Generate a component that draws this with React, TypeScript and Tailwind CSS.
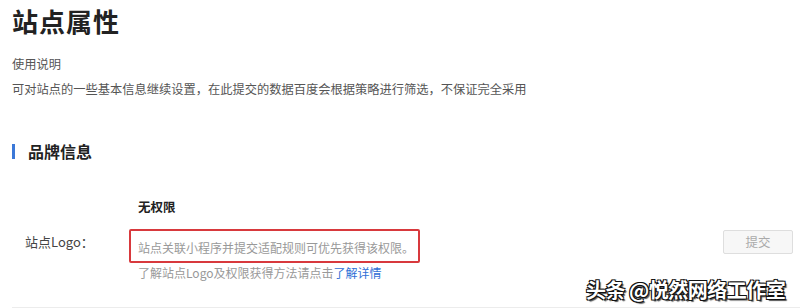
import React from 'react';

const font = '"Noto Sans CJK SC", "Noto Sans", sans-serif';

export default function App() {
  return (
    <div
      className="relative w-[800px] h-[308px] overflow-hidden bg-white text-[#333]"
      style={{ fontFamily: font }}
    >
      <div className="pl-3">
        {/* page title */}
        <h1 className="pt-[7px] text-[26px] leading-[28px] font-bold tracking-[1px] text-[#222]">
          站点属性
        </h1>

        {/* usage notes */}
        <div className="mt-[20px] text-[12.25px] leading-[18px] text-[#555]">
          <p>使用说明</p>
          <p className="mt-[7px]">
            可对站点的一些基本信息继续设置，在此提交的数据百度会根据策略进行筛选，不保证完全采用
          </p>
        </div>

        {/* section heading */}
        <div className="mt-[43px] flex items-center gap-[13px]">
          <span className="w-[3px] h-[15px] bg-[#3b78d8]" />
          <h2 className="text-[16px] leading-[20px] font-bold text-[#222]">品牌信息</h2>
        </div>

        {/* logo row */}
        <div className="mt-[37px] pb-[26px] border-b border-[#ececec] flex">
          <div className="w-[126px] pl-[13px] pt-[35px] text-[13px] leading-[18px] text-[#444]">
            站点Logo：
          </div>
          <div className="flex-1">
            <div className="text-[12.5px] leading-[18px] font-bold text-[#222]">无权限</div>
            <div className="mt-[13px] flex items-start justify-between">
              <div className="-ml-[9px]">
                <div className="w-[291px] h-[34px] border-2 border-[#d8393d] rounded-[2px] flex items-center pl-[7px]">
                  <span className="text-[12px] leading-[16px] text-[#999] pt-[3px]">
                    站点关联小程序并提交适配规则可优先获得该权限。
                  </span>
                </div>
                <p className="mt-[2px] pl-[9px] text-[12px] leading-[16px] text-[#999]">
                  了解站点Logo及权限获得方法请点击
                  <span className="text-[#2f6fd6]">了解详情</span>
                </p>
              </div>
              <button className="mt-[1px] w-[70px] h-[24px] border border-[#dedede] bg-[#f7f7f7] rounded-[2px] text-[12.5px] text-[#aaa] mr-[7px]">
                提交
              </button>
            </div>
          </div>
        </div>
      </div>

      {/* watermark */}
      <div
        className="absolute left-[586px] top-[278px] text-[20px] leading-[24px] font-bold text-white tracking-[-0.5px]"
        style={{
          textShadow:
            '1px 1px 0 #111, -1px -1px 0 #111, 1px -1px 0 #111, -1px 1px 0 #111, 2px 2px 1px #555',
        }}
      >
        头条 @悦然网络工作室
      </div>
    </div>
  );
}
